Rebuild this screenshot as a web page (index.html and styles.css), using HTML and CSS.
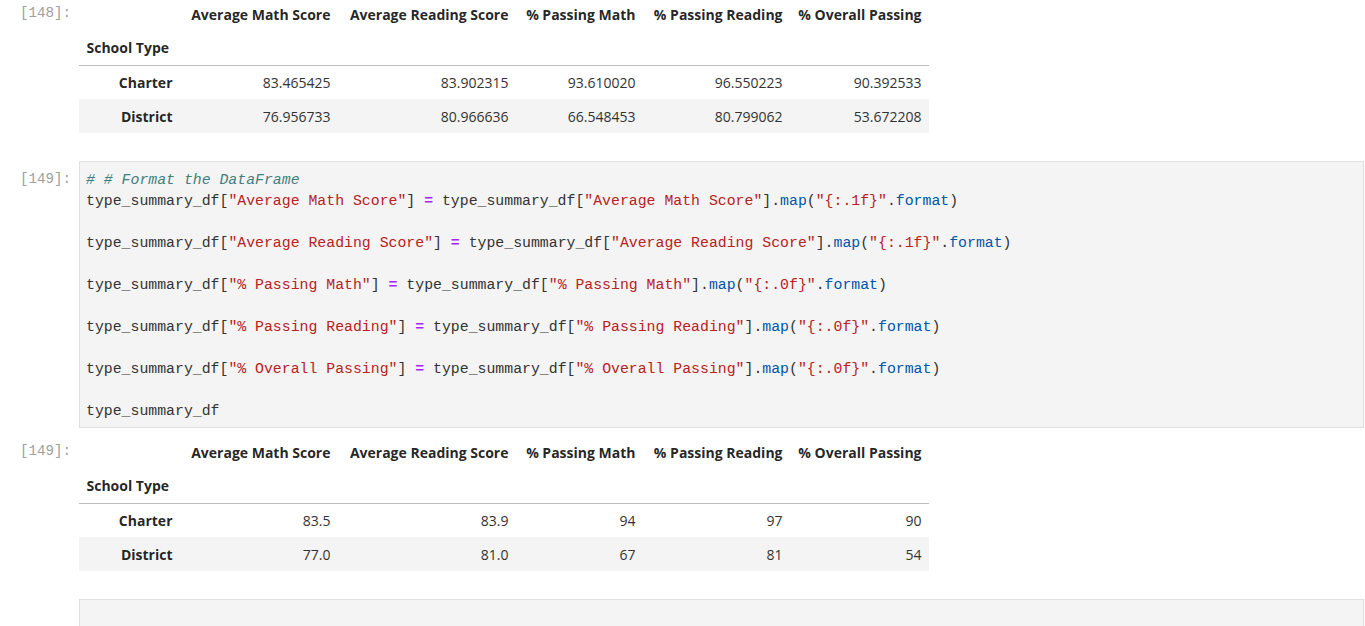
FILE: index.html
```html
<!DOCTYPE html>
<html>
<head>
<meta charset="utf-8">
<link rel="stylesheet" href="styles.css">
</head>
<body>
<div class="notebook">
  <div class="cell out first">
    <div class="prompt">[148]:</div>
    <div class="body">
      <table class="df">
        <thead>
          <tr><th class="c0"></th><th class="c1">Average Math Score</th><th class="c2">Average Reading Score</th><th class="c3">% Passing Math</th><th class="c4">% Passing Reading</th><th class="c5">% Overall Passing</th></tr>
          <tr class="idxname"><th class="c0 left">School Type</th><th></th><th></th><th></th><th></th><th></th></tr>
        </thead>
        <tbody>
          <tr><th>Charter</th><td>83.465425</td><td>83.902315</td><td>93.610020</td><td>96.550223</td><td>90.392533</td></tr>
          <tr class="odd"><th>District</th><td>76.956733</td><td>80.966636</td><td>66.548453</td><td>80.799062</td><td>53.672208</td></tr>
        </tbody>
      </table>
    </div>
  </div>

  <div class="cell code">
    <div class="prompt">[149]:</div>
    <div class="body editor"><pre><span class="cm"># # Format the DataFrame</span>
type_summary_df[<span class="st">"Average Math Score"</span>] <span class="op">=</span> type_summary_df[<span class="st">"Average Math Score"</span>].<span class="pr">map</span>(<span class="st">"{:.1f}"</span>.<span class="pr">format</span>)

type_summary_df[<span class="st">"Average Reading Score"</span>] <span class="op">=</span> type_summary_df[<span class="st">"Average Reading Score"</span>].<span class="pr">map</span>(<span class="st">"{:.1f}"</span>.<span class="pr">format</span>)

type_summary_df[<span class="st">"% Passing Math"</span>] <span class="op">=</span> type_summary_df[<span class="st">"% Passing Math"</span>].<span class="pr">map</span>(<span class="st">"{:.0f}"</span>.<span class="pr">format</span>)

type_summary_df[<span class="st">"% Passing Reading"</span>] <span class="op">=</span> type_summary_df[<span class="st">"% Passing Reading"</span>].<span class="pr">map</span>(<span class="st">"{:.0f}"</span>.<span class="pr">format</span>)

type_summary_df[<span class="st">"% Overall Passing"</span>] <span class="op">=</span> type_summary_df[<span class="st">"% Overall Passing"</span>].<span class="pr">map</span>(<span class="st">"{:.0f}"</span>.<span class="pr">format</span>)

type_summary_df</pre></div>
  </div>

  <div class="cell out second">
    <div class="prompt">[149]:</div>
    <div class="body">
      <table class="df">
        <thead>
          <tr><th class="c0"></th><th class="c1">Average Math Score</th><th class="c2">Average Reading Score</th><th class="c3">% Passing Math</th><th class="c4">% Passing Reading</th><th class="c5">% Overall Passing</th></tr>
          <tr class="idxname"><th class="c0 left">School Type</th><th></th><th></th><th></th><th></th><th></th></tr>
        </thead>
        <tbody>
          <tr><th>Charter</th><td>83.5</td><td>83.9</td><td>94</td><td>97</td><td>90</td></tr>
          <tr class="odd"><th>District</th><td>77.0</td><td>81.0</td><td>67</td><td>81</td><td>54</td></tr>
        </tbody>
      </table>
    </div>
  </div>

  <div class="cell code empty">
    <div class="prompt"></div>
    <div class="body editor"><pre> </pre></div>
  </div>
</div>
</body>
</html>
```

FILE: styles.css
```css
html, body {
  margin: 0;
  padding: 0;
  background: #ffffff;
  overflow: hidden;
}

.notebook {
  margin-top: -3px;
  width: 1365px;
}

.cell {
  display: flex;
  align-items: flex-start;
}

.prompt {
  flex: 0 0 79px;
  box-sizing: border-box;
  padding-right: 8px;
  text-align: right;
  font-family: "Liberation Mono", "DejaVu Sans Mono", monospace;
  font-size: 14.2px;
  line-height: 21px;
  color: #a0a0a0;
  white-space: pre;
}

.body {
  flex: 1 1 auto;
  min-width: 0;
}

.out .prompt {
  padding-top: 6px;
}

.first {
  margin-bottom: 28px;
}

.second {
  margin-top: 7px;
  margin-bottom: 28px;
}

.code .prompt {
  padding-top: 8px;
}

.editor {
  background: #f4f4f4;
  border: 1px solid #e0e0e0;
  margin-right: 1px;
  padding: 8px 6px 5px 6px;
}

.editor pre {
  margin: 0;
  font-family: "Liberation Mono", "DejaVu Sans Mono", monospace;
  font-size: 14.83px;
  line-height: 21px;
  color: #333333;
}

.empty .editor {
  height: 40px;
}

.cm { color: #408080; font-style: italic; }
.st { color: #ba2121; }
.op { color: #aa22ff; font-weight: bold; }
.pr { color: #0055aa; }

table.df {
  border-collapse: collapse;
  border-spacing: 0;
  font-family: "Open Sans", "Noto Sans", sans-serif;
  font-size: 14px;
  color: rgba(0, 0, 0, 0.87);
  table-layout: fixed;
  width: 850px;
}

.df th, .df td {
  padding: 0 7.5px;
  height: 34px;
  box-sizing: border-box;
  text-align: right;
  vertical-align: middle;
  white-space: nowrap;
  line-height: 19px;
}

.df th {
  font-weight: bold;
}

.df td {
  font-weight: normal;
  color: #333333;
}

.df th.left {
  text-align: left;
}

.df .c0 { width: 101px; }
.df .c1 { width: 158px; }
.df .c2 { width: 178px; }
.df .c3 { width: 127px; }
.df .c4 { width: 147px; }
.df .c5 { width: 139px; }

.df thead tr.idxname th {
  border-bottom: 1px solid #bdbdbd;
}

.df tbody tr.odd {
  background: #f4f4f4;
}
```
